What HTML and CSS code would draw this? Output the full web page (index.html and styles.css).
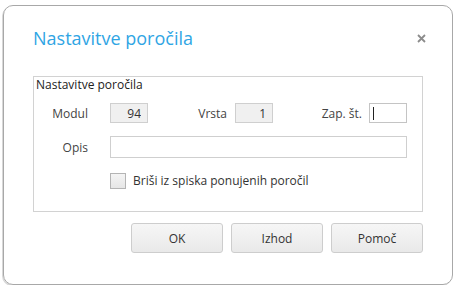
FILE: index.html
```html
<!DOCTYPE html>
<html lang="sl">
<head>
    <meta charset="UTF-8">
    <meta name="viewport" content="width=device-width, initial-scale=1.0">
    <title>Nastavitve poročila</title>
    <link rel="stylesheet" href="styles.css">
</head>
<body>
    <div class="dialog">
        <div class="dialog-header">
            <h1 class="dialog-title">Nastavitve poročila</h1>
            <svg class="close-btn" width="9" height="9" viewBox="0 0 9 9">
                <path d="M1 1 L8 8 M8 1 L1 8" stroke="#8c8c8c" stroke-width="1.8" fill="none"/>
            </svg>
        </div>

        <div class="group">
            <div class="group-title">Nastavitve poročila</div>

            <div class="row">
                <label class="lbl lbl-modul">Modul</label>
                <input class="field field-short field-readonly" type="text" value="94" readonly>
                <label class="lbl lbl-vrsta">Vrsta</label>
                <input class="field field-short field-readonly" type="text" value="1" readonly>
                <label class="lbl lbl-zap">Zap. št.</label>
                <div class="field field-short field-active"><span class="caret"></span></div>
            </div>

            <div class="row row-opis">
                <label class="lbl lbl-modul">Opis</label>
                <input class="field field-long" type="text">
            </div>

            <div class="row row-check">
                <span class="checkbox"></span>
                <span class="check-label">Briši iz spiska ponujenih poročil</span>
            </div>
        </div>

        <div class="buttons">
            <button class="btn">OK</button>
            <button class="btn">Izhod</button>
            <button class="btn">Pomoč</button>
        </div>
    </div>
</body>
</html>
```

FILE: styles.css
```css
* {
    margin: 0;
    padding: 0;
    box-sizing: border-box;
}

body {
    font-family: 'Open Sans', 'Liberation Sans', sans-serif;
    font-size: 12px;
    color: #333;
    background: #fff;
}

.dialog {
    margin: 5px 0 0 3px;
    width: 450px;
    height: 280px;
    border: 1px solid #a8a8a8;
    border-radius: 10px;
    box-shadow: -1px 1px 0 #d8d8d8;
    padding: 20px 29px 0 29px;
}

.dialog-header {
    display: flex;
    justify-content: space-between;
    align-items: center;
    height: 24px;
    margin-bottom: 26px;
}

.dialog-title {
    font-size: 18px;
    line-height: 24px;
    font-weight: normal;
    color: #2fa5e4;
}

.close-btn {
    margin-right: -3px;
    margin-top: 1px;
}

.group {
    height: 136px;
    border: 1px solid #d2d2d2;
    padding: 0 2px;
}

.group-title {
    line-height: 16px;
    color: #222;
}

.row {
    display: flex;
    align-items: center;
}

.group-title + .row {
    margin-top: 10px;
}

.lbl {
    text-align: right;
    color: #444;
}

.lbl-modul {
    width: 52px;
    margin-right: 22px;
}

.lbl-vrsta {
    width: 79px;
    margin-right: 8px;
}

.lbl-zap {
    width: 89px;
    margin-right: 7px;
}

.field {
    height: 20px;
    border: 1px solid #cfcfcf;
    background: #fff;
    font-family: inherit;
    font-size: 12px;
    color: #333;
    outline: none;
}

.field-short {
    width: 38px;
}

.field-readonly {
    background: #f0f0f0;
    text-align: right;
    padding-right: 6px;
}

.field-active {
    border-color: #c4c4c4;
    padding: 3px 0 0 3px;
}

.caret {
    display: block;
    width: 1px;
    height: 13px;
    background: #222;
}

.row-opis {
    margin-top: 13px;
}

.field-long {
    width: 297px;
    height: 22px;
}

.row-check {
    margin-top: 14px;
    padding-left: 74px;
}

.checkbox {
    width: 16px;
    height: 16px;
    border: 1px solid #b4b4b4;
    background: linear-gradient(#f4f4f4, #e6e6e6);
    margin-right: 7px;
}

.check-label {
    color: #333;
}

.buttons {
    display: flex;
    justify-content: flex-end;
    gap: 8px;
    margin-top: 11px;
}

.btn {
    width: 92px;
    height: 30px;
    border: 1px solid #cdcdcd;
    border-radius: 3px;
    background: linear-gradient(#f6f6f6, #e9e9e9);
    font-family: inherit;
    font-size: 12px;
    color: #333;
}
```
